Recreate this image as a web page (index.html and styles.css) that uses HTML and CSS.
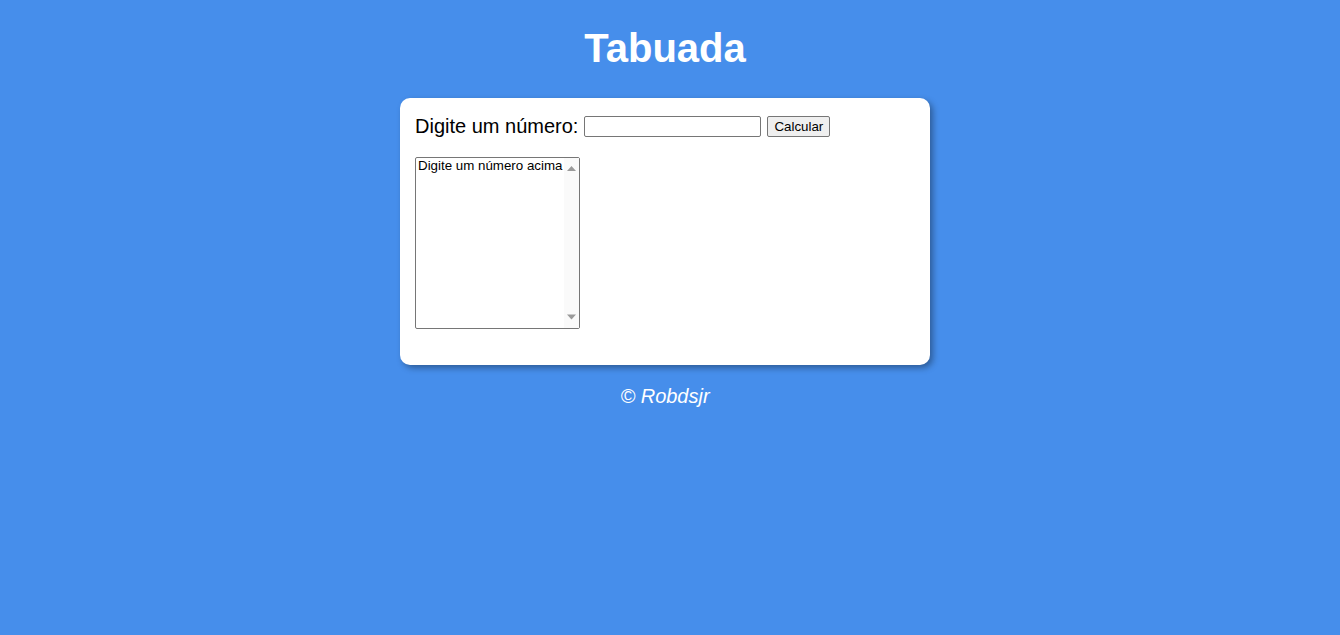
FILE: index.html
```html
<!DOCTYPE html>
<html lang="pt-BR">
<head>
<meta charset="utf-8">
<title>Tabuada</title>
<link rel="stylesheet" href="styles.css">
</head>
<body>
<header class="top">
  <h1 class="title">Tabuada</h1>
</header>
<section class="card">
  <div class="row">
    <label class="label" for="txtn">Digite um número:</label>
    <input class="num" type="number" id="txtn">
    <button class="btn" type="button">Calcular</button>
  </div>
  <div class="listwrap">
    <select class="tab" size="10">
      <option>Digite um número acima</option>
    </select>
    <span class="sbar" aria-hidden="true">
      <svg class="arrow" width="15" height="15" viewBox="0 0 15 15"><path d="M3 13 L7.5 8 L12 13 Z" fill="#9a9a9a"/></svg>
      <svg class="arrow" width="15" height="15" viewBox="0 0 15 15"><path d="M3 1.5 L7.5 6.5 L12 1.5 Z" fill="#9a9a9a"/></svg>
    </span>
  </div>
</section>
<footer class="foot">
  <p>&copy; Robdsjr</p>
</footer>
</body>
</html>
```
FILE: styles.css
```css
html, body {
  margin: 0;
  padding: 0;
}
body {
  background: #468eeb;
  font-family: "Liberation Sans", Arial, sans-serif;
  font-size: 20px;
  padding-right: 10px;
}
.top {
  color: #fff;
  text-align: center;
  padding-top: 25px;
}
.title {
  margin: 0 0 27px;
  font-size: 40px;
  line-height: 46px;
}
.card {
  background: #fff;
  width: 500px;
  margin: 0 auto;
  padding: 15px;
  border-radius: 10px;
  box-shadow: 3px 3px 6px rgba(0, 0, 0, 0.35);
}
.row {
  display: flex;
  align-items: center;
  gap: 6px;
  height: 27px;
}
.label {
  font-size: 20px;
}
.num {
  width: 177px;
  height: 21px;
  box-sizing: border-box;
  font-family: "Liberation Sans", Arial, sans-serif;
  font-size: 13.33px;
  border: 1px solid #767676;
  border-radius: 2px;
  padding: 1px 2px;
  -moz-appearance: textfield;
}
.num::-webkit-outer-spin-button,
.num::-webkit-inner-spin-button {
  -webkit-appearance: none;
  margin: 0;
}
.btn {
  font-family: "Liberation Sans", Arial, sans-serif;
  font-size: 13.33px;
  height: 21px;
  padding: 1px 6px;
  background: #efefef;
  border: 1px solid #767676;
  border-radius: 2px;
  color: #000;
}
.listwrap {
  position: relative;
  width: 165px;
  margin-top: 17px;
  margin-bottom: 21px;
}
.tab {
  display: block;
  width: 165px;
  height: 172px;
  font-family: "Liberation Sans", Arial, sans-serif;
  font-size: 13.33px;
  border: 1px solid #767676;
  border-radius: 2px;
  padding: 0;
  color: #000;
}
.tab option {
  padding: 0 2px;
}
.sbar {
  position: absolute;
  top: 1px;
  right: 1px;
  width: 15px;
  height: 170px;
  background: #fafafa;
  display: flex;
  flex-direction: column;
  justify-content: space-between;
  pointer-events: none;
}
.arrow {
  display: block;
}
.foot {
  color: #fff;
  text-align: center;
  font-style: italic;
  font-size: 20px;
}
.foot p {
  margin: 20px 0;
}
```
